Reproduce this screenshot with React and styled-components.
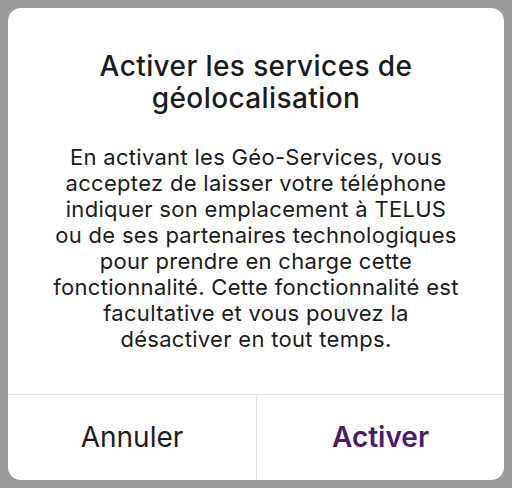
import React from "react";
import styled, { createGlobalStyle } from "styled-components";

const GlobalStyle = createGlobalStyle`
  html, body {
    margin: 0;
    padding: 0;
    background: #9a9a9a;
    font-family: Inter, "Noto Sans", sans-serif;
    -webkit-font-smoothing: antialiased;
  }
`;

const Screen = styled.div`
  width: 512px;
  height: 488px;
  padding: 8px;
  box-sizing: border-box;
  background: #9a9a9a;
`;

const Dialog = styled.div`
  height: 100%;
  background: #fff;
  border-radius: 13px;
  display: flex;
  flex-direction: column;
  overflow: hidden;
`;

const Content = styled.div`
  flex: 1;
  padding: 42px 10px 0;
  text-align: center;
  color: #1c1c1c;
`;

const Title = styled.h2`
  margin: 0 0 30px;
  font-size: 28px;
  line-height: 32px;
  font-weight: 500;
  letter-spacing: 0.4px;
`;

const Message = styled.p`
  margin: 0;
  font-size: 22px;
  line-height: 26px;
  font-weight: 400;
  letter-spacing: 0.3px;
`;

const Actions = styled.div`
  height: 85px;
  display: grid;
  grid-template-columns: 1fr 1fr;
  border-top: 1px solid #e2e2e2;
`;

const ActionButton = styled.button`
  border: none;
  background: transparent;
  font-family: inherit;
  font-size: 28px;
  font-weight: ${({ $primary }) => ($primary ? 600 : 400)};
  color: ${({ $primary }) => ($primary ? "#4b1c6e" : "#1c1c1c")};
  padding: 0 0 2px;
  & + & {
    border-left: 1px solid #e2e2e2;
  }
`;

const App = () => (
  <Screen>
    <GlobalStyle />
    <Dialog>
      <Content>
        <Title>
          Activer les services de
          <br />
          géolocalisation
        </Title>
        <Message>
          En activant les Géo-Services, vous
          <br />
          acceptez de laisser votre téléphone
          <br />
          indiquer son emplacement à TELUS
          <br />
          ou de ses partenaires technologiques
          <br />
          pour prendre en charge cette
          <br />
          fonctionnalité. Cette fonctionnalité est
          <br />
          facultative et vous pouvez la
          <br />
          désactiver en tout temps.
        </Message>
      </Content>
      <Actions>
        <ActionButton>Annuler</ActionButton>
        <ActionButton $primary>Activer</ActionButton>
      </Actions>
    </Dialog>
  </Screen>
);

export default App;
